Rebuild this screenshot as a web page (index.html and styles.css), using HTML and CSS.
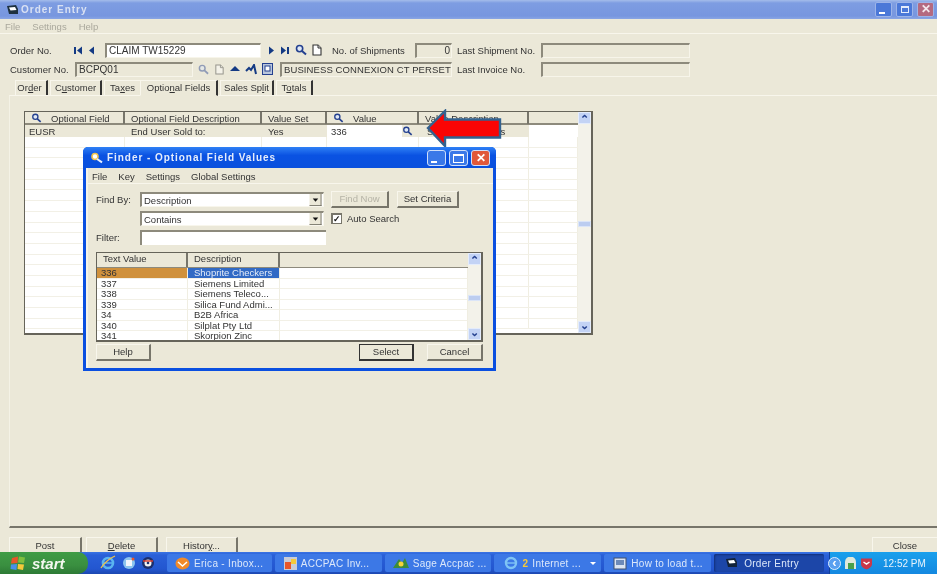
FILE: index.html
```html
<!DOCTYPE html>
<html lang="en">
<head>
<meta charset="utf-8">
<title>Order Entry</title>
<link rel="stylesheet" href="styles.css">
</head>
<body>
<svg class="defs" width="0" height="0" aria-hidden="true">
  <symbol id="mag" viewBox="0 0 12 12"><circle cx="4.6" cy="4.6" r="3.1" fill="#dfe8f5" stroke="#24408f" stroke-width="1.6"/><path d="M7 7l4 3.6" stroke="#24408f" stroke-width="2"/></symbol>
  <symbol id="mag-gold" viewBox="0 0 14 12"><circle cx="5" cy="4.5" r="3" fill="#fff" stroke="#f0c24a" stroke-width="1.6"/><path d="M7 7l5 3.4" stroke="#e8f0ff" stroke-width="2"/></symbol>
  <symbol id="doc" viewBox="0 0 12 12"><path d="M2 1h5l3 3v7H2z" fill="#fff" stroke="#333" stroke-width="1.1"/><path d="M7 1v3h3" fill="#ddd" stroke="#333"/></symbol>
  <symbol id="combo" viewBox="0 0 13 13"><rect width="13" height="13" fill="#ebe8d8"/><path d="M0 12.500h13M12.500 0v13" stroke="#77756a"/><path d="M3.500 5h6L6.500 8.500z" fill="#111"/></symbol>
</svg>
<div class="screen">
  <div class="app">
    <header class="titlebar">
      <svg class="appicon" width="13" height="12" viewBox="0 0 13 12"><path d="M1 2l9-1 2 4v5H3z" fill="#1d3140"/><path d="M3 3.500l6-.5 1.500 3-6 .5z" fill="#fff"/></svg>
      <span class="apptitle">Order Entry</span>
      <div class="winbtns">
        <span class="wb"><i class="ico-min"></i></span>
        <span class="wb"><i class="ico-rest"></i></span>
        <span class="wb wb-close">✕</span>
      </div>
    </header>
    <nav class="menubar"><span>File</span><span>Settings</span><span>Help</span></nav>

    <section class="form">
      <div class="row">
        <label class="lbl l-order">Order No.</label>
        <span class="vcr">
          <svg width="26" height="9" viewBox="0 0 26 9"><path d="M0 1h2v7H0zM8 0.500v8L3 4.500zM20 0.500v8l-5-4z" fill="#143a84"/></svg>
        </span>
        <span class="field white f-order">CLAIM TW15229</span>
        <span class="nav2">
          <svg width="24" height="9" viewBox="0 0 24 9"><path d="M2 .5v8l5-4zM14 .5v8l5-4zM20 1h2v7h-2z" fill="#143a84"/></svg>
          <svg class="i12" width="12" height="12"><use href="#mag"/></svg>
          <svg class="i12" width="12" height="12"><use href="#doc"/></svg>
        </span>
        <label class="lbl l-ship">No. of Shipments</label>
        <span class="field f-ship">0</span>
        <label class="lbl l-last">Last Shipment No.</label>
        <span class="field f-last"></span>
      </div>
      <div class="row row2">
        <label class="lbl l-cust">Customer No.</label>
        <span class="field f-cust">BCPQ01</span>
        <span class="cust-icons">
          <svg class="faded" width="11" height="11"><use href="#mag"/></svg>
          <svg class="faded" width="11" height="11"><use href="#doc"/></svg>
          <svg width="10" height="8" viewBox="0 0 10 8"><path d="M5 1l5 5H0z" fill="#143a84"/></svg>
          <svg width="12" height="11" viewBox="0 0 12 11"><path d="M1 7l3-3 2 2 3-5 2 9" fill="none" stroke="#143a84" stroke-width="2"/></svg>
          <svg width="11" height="12" viewBox="0 0 11 12"><rect x=".5" y=".5" width="10" height="11" fill="#b9c6dc" stroke="#24408f"/><rect x="3" y="3" width="5" height="5" fill="#fff" stroke="#24408f"/></svg>
        </span>
        <span class="field f-name">BUSINESS CONNEXION CT PERSET</span>
        <label class="lbl l-inv">Last Invoice No.</label>
        <span class="field f-last"></span>
      </div>
    </section>

    <div class="tabs">
      <span class="tab t1">Or<u>d</u>er</span>
      <span class="tab t2">C<u>u</u>stomer</span>
      <span class="tab t3">Ta<u>x</u>es</span>
      <span class="tab t4 active">Optio<u>n</u>al Fields</span>
      <span class="tab t5">Sales Sp<u>l</u>it</span>
      <span class="tab t6">T<u>o</u>tals</span>
    </div>

    <main class="panel">
      <div class="grid">
        <div class="grid-main">
          <div class="ghead">
            <span class="c1"><svg width="11" height="10"><use href="#mag"/></svg><b>Optional Field</b></span>
            <span class="c2">Optional Field Description</span>
            <span class="c3">Value Set</span>
            <span class="c4"><svg width="11" height="10"><use href="#mag"/></svg><b>Value</b></span>
            <span class="c5">Value Description</span>
            <span class="c6"></span>
          </div>
          <div class="grow first">
            <span class="c1">EUSR</span><span class="c2">End User Sold to:</span><span class="c3">Yes</span>
            <span class="c4 cell-edit">336<svg width="11" height="10"><use href="#mag"/></svg></span>
            <span class="c5">Shoprite Checkers</span><span class="c6 cell-w"></span>
          </div>
          <div class="grow"><span class="c1"></span><span class="c2"></span><span class="c3"></span><span class="c4"></span><span class="c5"></span><span class="c6"></span></div>
          <div class="grow"><span class="c1"></span><span class="c2"></span><span class="c3"></span><span class="c4"></span><span class="c5"></span><span class="c6"></span></div>
          <div class="grow"><span class="c1"></span><span class="c2"></span><span class="c3"></span><span class="c4"></span><span class="c5"></span><span class="c6"></span></div>
          <div class="grow"><span class="c1"></span><span class="c2"></span><span class="c3"></span><span class="c4"></span><span class="c5"></span><span class="c6"></span></div>
          <div class="grow"><span class="c1"></span><span class="c2"></span><span class="c3"></span><span class="c4"></span><span class="c5"></span><span class="c6"></span></div>
          <div class="grow"><span class="c1"></span><span class="c2"></span><span class="c3"></span><span class="c4"></span><span class="c5"></span><span class="c6"></span></div>
          <div class="grow"><span class="c1"></span><span class="c2"></span><span class="c3"></span><span class="c4"></span><span class="c5"></span><span class="c6"></span></div>
          <div class="grow"><span class="c1"></span><span class="c2"></span><span class="c3"></span><span class="c4"></span><span class="c5"></span><span class="c6"></span></div>
          <div class="grow"><span class="c1"></span><span class="c2"></span><span class="c3"></span><span class="c4"></span><span class="c5"></span><span class="c6"></span></div>
          <div class="grow"><span class="c1"></span><span class="c2"></span><span class="c3"></span><span class="c4"></span><span class="c5"></span><span class="c6"></span></div>
          <div class="grow"><span class="c1"></span><span class="c2"></span><span class="c3"></span><span class="c4"></span><span class="c5"></span><span class="c6"></span></div>
          <div class="grow"><span class="c1"></span><span class="c2"></span><span class="c3"></span><span class="c4"></span><span class="c5"></span><span class="c6"></span></div>
          <div class="grow"><span class="c1"></span><span class="c2"></span><span class="c3"></span><span class="c4"></span><span class="c5"></span><span class="c6"></span></div>
          <div class="grow"><span class="c1"></span><span class="c2"></span><span class="c3"></span><span class="c4"></span><span class="c5"></span><span class="c6"></span></div>
          <div class="grow"><span class="c1"></span><span class="c2"></span><span class="c3"></span><span class="c4"></span><span class="c5"></span><span class="c6"></span></div>
          <div class="grow"><span class="c1"></span><span class="c2"></span><span class="c3"></span><span class="c4"></span><span class="c5"></span><span class="c6"></span></div>
          <div class="grow"><span class="c1"></span><span class="c2"></span><span class="c3"></span><span class="c4"></span><span class="c5"></span><span class="c6"></span></div>
          <div class="grow"><span class="c1"></span><span class="c2"></span><span class="c3"></span><span class="c4"></span><span class="c5"></span><span class="c6"></span></div>
        </div>
        <div class="sbar big">
          <span class="sb-btn">⌃</span>
          <span class="thumb th-main"></span>
          <span class="sb-btn down">⌄</span>
        </div>
      </div>
    </main>

    <footer class="actions">
      <span class="btn-f b-post">Post</span>
      <span class="btn-f b-del"><u>D</u>elete</span>
      <span class="btn-f b-his">Histor<u>y</u>...</span>
      <span class="btn-f b-close">Close</span>
    </footer>
  </div>

  <div class="taskbar">
    <div class="start">
      <svg width="17" height="15" viewBox="0 0 17 15"><path d="M2 2l6-1.500L7.500 7 1 7.500z" fill="#e8562a"/><path d="M9 .5l6 1L14 7l-6-.5z" fill="#7fbf3f"/><path d="M1 8.500L7 8l-.5 6L.5 13z" fill="#4a8fe8"/><path d="M8 8l6 .5-1 5.500-5.500-1z" fill="#f5c93a"/></svg>
      <span>start</span>
    </div>
    <div class="quick">
      <svg width="16" height="16" viewBox="0 0 16 16"><circle cx="8" cy="8" r="5" fill="none" stroke="#5ab4f0" stroke-width="2.600"/><path d="M3.500 8h9" stroke="#5ab4f0" stroke-width="1.500"/><path d="M1 13C3 9 10 3 15 1" fill="none" stroke="#f0c24a" stroke-width="1.200"/></svg>
      <svg width="14" height="14" viewBox="0 0 14 14"><circle cx="7" cy="7" r="6" fill="#8cc4ee"/><rect x="4" y="4" width="6" height="6" fill="#f2f6fc"/><circle cx="11" cy="3" r="1.500" fill="#e8562a"/></svg>
      <svg width="14" height="14" viewBox="0 0 14 14"><circle cx="7" cy="7" r="6" fill="#1d2f6b"/><circle cx="7" cy="7" r="3.500" fill="#f2f2f2"/><path d="M2 5h10" stroke="#d8412f" stroke-width="1.500"/><circle cx="7" cy="7" r="1.300" fill="#1d2f6b"/></svg>
    </div>
    <div class="tasks">
      <span class="task t-1"><svg width="15" height="13" viewBox="0 0 15 13"><ellipse cx="7.500" cy="6.500" rx="7" ry="6" fill="#f08a2a"/><path d="M3 5l4.500 4L12 5" fill="none" stroke="#fff" stroke-width="1.500"/></svg>Erica - Inbox...</span>
      <span class="task t-2"><svg width="13" height="13" viewBox="0 0 13 13"><rect width="13" height="13" fill="#c8ccd8"/><rect x="1" y="5" width="6" height="7" fill="#e8562a"/><rect x="7" y="2" width="5" height="5" fill="#f5c93a"/></svg>ACCPAC Inv...</span>
      <span class="task t-3"><svg width="16" height="12" viewBox="0 0 16 12"><path d="M0 11L6 2l3 4 3-5 4 10z" fill="#3c8c3c"/><circle cx="8" cy="7" r="2.500" fill="#f5d33a"/></svg>Sage Accpac ...</span>
      <span class="task t-4"><svg width="14" height="14" viewBox="0 0 14 14"><circle cx="7" cy="7" r="5" fill="none" stroke="#7fc4f5" stroke-width="2.400"/><path d="M3 7h8" stroke="#7fc4f5" stroke-width="1.400"/></svg><em>2</em>Internet ...<i class="caret"></i></span>
      <span class="task t-5"><svg width="14" height="13" viewBox="0 0 14 13"><rect x="1" y="1" width="12" height="11" fill="#dbe4f2" stroke="#40506e"/><rect x="3" y="3" width="8" height="5" fill="#6c89b8"/></svg>How to load t...</span>
      <span class="task t-6 on"><svg width="13" height="12" viewBox="0 0 13 12"><path d="M1 2l9-1 2 4v5H3z" fill="#12233a"/><path d="M3 3.500l6-.5 1.500 3-6 .5z" fill="#fff"/></svg>Order Entry</span>
    </div>
    <div class="tray">
      <span class="chev">‹</span>
      <svg width="13" height="13" viewBox="0 0 13 13"><path d="M1 12V5a5.500 5.500 0 0 1 11 0v7z" fill="#dfe8da"/><rect x="4" y="6" width="6" height="6" fill="#49a04a"/></svg>
      <svg width="13" height="13" viewBox="0 0 13 13"><path d="M1 1.500h11V7c0 3-3 4.500-5.500 5.500C4 11.500 1 10 1 7z" fill="#c9384a"/><path d="M3.500 5l3 2 3-2" stroke="#fff" stroke-width="1.500" fill="none"/></svg>
      <span class="clock">12:52 PM</span>
    </div>
  </div>

  <svg class="arrow" width="78" height="40" viewBox="0 0 78 40"><path d="M3 19L20 2v8.500h55v18H20V37z" fill="#fb0404" stroke="#33628f" stroke-width="2.400"/></svg>

  <section class="finder">
    <header class="f-title">
      <svg width="14" height="12"><use href="#mag-gold"/></svg>
      <span class="f-title-text">Finder - Optional Field Values</span>
      <div class="f-btns">
        <span class="fb"><i class="ico-min"></i></span>
        <span class="fb"><i class="ico-max"></i></span>
        <span class="fb fb-x">✕</span>
      </div>
    </header>
    <div class="f-body">
      <nav class="f-menu"><span>File</span><span>Key</span><span>Settings</span><span>Global Settings</span></nav>
      <div class="f-form">
        <label class="f-lbl">Find By:</label>
        <span class="combo">Description<svg width="13" height="13"><use href="#combo"/></svg></span>
        <span class="xbtn disabled">Find Now</span>
        <span class="xbtn set">Set Criteria</span>

        <span class="f-lbl"></span>
        <span class="combo">Contains<svg width="13" height="13"><use href="#combo"/></svg></span>
        <span class="auto"><i class="chk">✓</i>Auto Search</span>

        <label class="f-lbl">Filter:</label>
        <span class="filter"></span>
      </div>
      <div class="list">
        <div class="list-main">
          <div class="lhead"><span class="l1">Text Value</span><span class="l2">Description</span><span class="l3"></span></div>
          <div class="lrow sel"><span class="l1">336</span><span class="l2">Shoprite Checkers</span><span class="l3"></span></div>
          <div class="lrow"><span class="l1">337</span><span class="l2">Siemens Limited</span><span class="l3"></span></div>
          <div class="lrow"><span class="l1">338</span><span class="l2">Siemens Teleco...</span><span class="l3"></span></div>
          <div class="lrow"><span class="l1">339</span><span class="l2">Silica Fund Admi...</span><span class="l3"></span></div>
          <div class="lrow"><span class="l1">34</span><span class="l2">B2B Africa</span><span class="l3"></span></div>
          <div class="lrow"><span class="l1">340</span><span class="l2">Silplat Pty Ltd</span><span class="l3"></span></div>
          <div class="lrow"><span class="l1">341</span><span class="l2">Skorpion Zinc</span><span class="l3"></span></div>
        </div>
        <div class="sbar small">
          <span class="sb-btn">⌃</span>
          <span class="thumb th-list"></span>
          <span class="sb-btn down">⌄</span>
        </div>
      </div>
      <div class="f-foot">
        <span class="xbtn help">Help</span>
        <span class="xbtn select">Select</span>
        <span class="xbtn cancel">Cancel</span>
      </div>
    </div>
  </section>
</div>
</body>
</html>
```
FILE: styles.css
```css
* { box-sizing: border-box; }
html, body { margin: 0; padding: 0; }
body { width: 937px; height: 574px; overflow: hidden; background: #ebe8d8; }
.defs { position: absolute; }
.screen {
  position: relative; width: 937px; height: 574px; overflow: hidden;
  display: flex; flex-direction: column;
  font: 9.5px "Liberation Sans", Arial, sans-serif; color: #333;
  filter: blur(.5px);
}
.app { flex: 1; display: flex; flex-direction: column; min-height: 0; background: #ebe8d8; }

/* title + menu */
.titlebar {
  height: 19px; display: flex; align-items: center; padding: 0 2px 0 6px; flex: none;
  background: linear-gradient(#a4bcea 0, #7e9de2 3px, #7796df 16px, #8aa6e4 19px);
}
.apptitle { margin-left: 2px; font-size: 10px; font-weight: bold; letter-spacing: 1px; color: #d9e1f3; }
.winbtns { margin-left: auto; display: flex; gap: 4px; margin-right: 1px; }
.wb { width: 17px; height: 15px; background: #4b78d8; border: 1px solid #9db4e8; border-radius: 2px; position: relative; display: block; }
.wb-close { background: #b46a80; color: #f4e8ec; font: bold 12px/13px "Liberation Sans", sans-serif; text-align: center; }
.ico-min { position: absolute; left: 3px; bottom: 2px; width: 6px; height: 2px; background: #fff; }
.ico-rest { position: absolute; left: 4px; top: 3px; width: 8px; height: 7px; border: 1px solid #e5ecfb; border-top-width: 2px; }
.ico-max { position: absolute; left: 3px; top: 3px; width: 11px; height: 9px; border: 1px solid #fff; border-top-width: 2px; }
.menubar {
  height: 15px; flex: none; display: flex; gap: 12px; align-items: center; padding-left: 5px;
  color: #aaa89c; border-bottom: 1px solid #f8f6ec;
}

/* form */
.form { height: 46px; flex: none; padding-top: 8px; }
.row { height: 16px; display: flex; align-items: center; }
.row2 { margin-top: 3px; }
.lbl { white-space: nowrap; display: block; }
.field {
  display: block; height: 15px; padding: 0 2px; line-height: 12px; white-space: nowrap; overflow: hidden;
  border: 1px solid #f7f5ea; border-top: 2px solid #8d8a7c; border-left: 2px solid #8d8a7c; background: #ebe8d8;
  font-size: 10px;
}
.white { background: #fff; }
.l-order { margin-left: 10px; width: 64px; }
.vcr { width: 31px; display: flex; align-items: center; }
.f-order { width: 156px; }
.nav2 { width: 65px; margin-left: 6px; display: flex; align-items: center; gap: 4px; }
.l-ship { width: 83px; }
.f-ship { width: 37px; text-align: right; padding-right: 1px; }
.l-last { width: 84px; margin-left: 5px; }
.f-last { width: 149px; }
.l-cust { margin-left: 10px; width: 65px; }
.f-cust { width: 118px; }
.cust-icons { width: 87px; padding-left: 5px; padding-right: 7px; display: flex; align-items: center; justify-content: space-between; }
.faded { opacity: .45; }
.f-name { width: 172px; font-size: 9.5px; letter-spacing: .1px; }
.l-inv { width: 84px; margin-left: 5px; }

/* tabs */
.tabs { height: 15px; flex: none; display: flex; align-items: flex-end; padding-left: 15px; position: relative; z-index: 1; }
.tab { height: 15px; line-height: 14px; text-align: center; border-right: 2px solid #333; border-top: 1px solid #f8f6ec; border-left: 1px solid #f8f6ec; margin-right: 2px; white-space: nowrap; }
.t1 { width: 33px; padding-right: 3px; } .t2 { width: 52px; } .t3 { width: 36px; margin-right: 0; border-right: 0; }
.t4 { width: 78px; height: 16px; line-height: 13px; background: #ebe8d8; border-bottom: 1px solid #ebe8d8; margin-bottom: -1px; }
.t5 { width: 54px; } .t6 { width: 37px; }

/* main panel */
.panel { flex: 1; min-height: 0; padding: 15px 0 0 14px; margin-left: 9px; border-top: 1px solid #f8f6ec; border-left: 1px solid #f4f2e6; border-bottom: 2px solid #77756a; }
.grid { width: 569px; height: 224px; border: 1px solid #66645a; border-width: 1px 2px 2px 1px; display: flex; background: #fff; }
.grid-main { flex: 1; min-width: 0; overflow: hidden; }
.ghead { height: 13px; display: flex; background: #ebe8d8; border-bottom: 2px solid #8d8a7c; }
.ghead span { border-right: 2px solid #77756a; line-height: 11px; height: 12px; white-space: nowrap; padding-left: 6px; display: flex; align-items: center; }
.ghead svg { margin-right: 9px; flex: none; }
.ghead b { font-weight: normal; }
.ghead .c6 { border-right: 0; }
.grow { height: 10.7px; display: flex; border-bottom: 1px solid #f2f0e6; }
.grow span { border-right: 1px solid #f0eee2; white-space: nowrap; overflow: hidden; display: flex; align-items: center; padding-left: 4px; }
.grow.first { height: 12px; background: #ebe8d8; border-bottom: 0; }
.first span { border-right: 0; font-size: 9.5px; }
.c1 { width: 100px; flex: none; }
.c2 { width: 137px; flex: none; }
.c3 { width: 65px; flex: none; }
.c4 { width: 92px; flex: none; }
.c5 { width: 110px; flex: none; }
.c6 { flex: 1; }
.first .c2, .first .c3 { padding-left: 6px; }
.grow .cell-edit { background: linear-gradient(90deg, #fff 75px, #ebe8d8 75px); justify-content: space-between; padding-right: 6px; border-right: 0; }
.grow .first-c5 { padding-left: 6px; }
.first .c5 { padding-left: 8px; }
.cell-w { background: #fff; }

.sbar { background: #f3f2ea; display: flex; flex-direction: column; justify-content: space-between; position: relative; flex: none; }
.sbar.big { width: 13px; }
.sbar.small { width: 13px; }
.sb-btn { height: 12px; background: #c3d3f5; color: #24408f; font: bold 11px/13px "Liberation Sans", sans-serif; text-align: center; display: block; border: 1px solid #e4ecfb; }
.sb-btn.down { line-height: 6px; }
.thumb { position: absolute; left: 0; width: 100%; height: 6px; background: #bccdf0; border: 1px solid #dbe5f8; }
.th-main { top: 109px; }
.th-list { top: 42px; }

/* footer */
.actions { height: 24px; flex: none; display: flex; align-items: flex-start; padding: 9px 0 0 9px; overflow: hidden; }
.btn-f { display: block; height: 18px; text-align: center; line-height: 16px; color: #333; border: 1px solid #f8f6ec; border-right: 2px solid #77756a; }
.b-post { width: 73px; margin-right: 4px; }
.b-del { width: 72px; margin-right: 8px; }
.b-his { width: 72px; }
.b-close { width: 65px; margin-left: auto; border-right: 0; }

/* taskbar */
.taskbar { height: 22px; flex: none; display: flex; align-items: stretch; background: linear-gradient(#3a74e4 0, #2a60d8 3px, #2356d0 17px, #1c48b0 22px); color: #dce8fa; font-size: 10px; }
.start { width: 88px; display: flex; align-items: center; gap: 5px; padding-left: 10px; border-radius: 0 10px 10px 0; background: linear-gradient(#3f9c45, #3a8f40 60%, #2d7a35); color: #f4f8f0; font: italic bold 15px "Liberation Sans", sans-serif; }
.quick { width: 73px; padding: 0 6px 0 12px; display: flex; align-items: center; justify-content: space-between; }
.tasks { flex: 1; display: flex; align-items: center; gap: 3px; padding-left: 6px; min-width: 0; }
.task { display: flex; align-items: center; gap: 4px; height: 18px; background: #3c78e6; border-radius: 2px; padding-left: 8px; white-space: nowrap; letter-spacing: .3px; position: relative; }
.task em { font-style: normal; color: #f5c93a; font-weight: bold; }
.t-1 { width: 105px; } .t-2 { width: 107px; padding-left: 9px; } .t-3 { width: 107px; } .t-4 { width: 107px; padding-left: 10px; } .t-5 { width: 107px; padding-left: 9px; }
.t-6 { width: 110px; padding-left: 11px; gap: 6px; }
.on { background: #1c46a8; box-shadow: inset 1px 1px 2px #12307a; }
.caret { position: absolute; right: 5px; top: 8px; border: 3px solid transparent; border-top-color: #fff; }
.tray { width: 108px; margin-left: 5px; display: flex; align-items: center; gap: 3px; background: linear-gradient(#1aa0ec, #1488e0); padding-left: 0; border-left: 1px solid #0e3f9c; }
.chev { width: 13px; height: 13px; border-radius: 50%; background: #5aa0f0; border: 1px solid #dcecff; color: #fff; font: bold 13px/9px "Liberation Sans", sans-serif; text-align: center; flex: none; margin-left: -2px; }
.clock { margin-left: 7px; white-space: nowrap; color: #e8f2fc; }

/* arrow and finder float over the app */
.arrow { position: absolute; left: 425px; top: 109px; }
.finder {
  position: absolute; left: 83px; top: 147px; width: 413px; height: 224px;
  display: flex; flex-direction: column; background: #0a4fe0; border-radius: 5px 5px 0 0;
  padding: 0 3px 3px 3px;
}
.f-title { height: 21px; flex: none; display: flex; align-items: center; background: linear-gradient(#2f80f5, #0a52e2 40%, #0a50dd); margin: 0 -3px; padding: 0 6px 0 7px; border-radius: 5px 5px 0 0; }
.f-title-text { margin-left: 3px; color: #e6eefc; font-size: 10px; font-weight: bold; letter-spacing: .95px; white-space: nowrap; }
.f-btns { margin-left: auto; display: flex; gap: 3px; }
.fb { display: block; width: 19px; height: 16px; border: 1px solid #cfdffa; border-radius: 3px; background: #3a78e8; position: relative; }
.fb-x { background: #e0583a; color: #fff; font: bold 12px/14px "Liberation Sans", sans-serif; text-align: center; }
.f-body { flex: 1; min-height: 0; background: #ebe8d8; border-left: 2px solid #f6f4e8; padding: 0 8px 0 0; display: flex; flex-direction: column; }
.f-menu { height: 15px; flex: none; margin-top: 1px; margin-right: -8px; display: flex; gap: 11px; align-items: center; padding-left: 4px; border-bottom: 1px solid #f8f6ec; }
.f-form { display: grid; grid-template-columns: 44px 184px 73px 62px; align-items: center; padding: 8px 0 0 8px; grid-auto-rows: 15px; row-gap: 4px; flex: none; }
.f-lbl { display: block; }
.combo {
  display: flex; align-items: center; justify-content: space-between; height: 15px; background: #fff; padding: 0 1px 0 2px;
  border: 1px solid #f8f6ec; border-top: 2px solid #8d8a7c; border-left: 2px solid #8d8a7c;
}
.combo svg { height: 12px; width: 13px; }
.xbtn { display: block; height: 17px; text-align: center; line-height: 14px; border: 1px solid #f8f6ec; border-right: 2px solid #77756a; border-bottom: 2px solid #77756a; }
.disabled { width: 58px; margin-left: 7px; color: #b5b3a6; }
.set { width: 62px; }
.auto { display: flex; align-items: center; gap: 5px; margin-left: 7px; white-space: nowrap; grid-column: 3 / 5; }
.chk { width: 11px; height: 11px; display: block; background: #fff; border: 1px solid #77756a; border-top-width: 2px; border-left-width: 2px; font: bold 9px/8px "Liberation Sans", sans-serif; color: #111; text-align: center; }
.filter { display: block; width: 186px; height: 15px; background: #fff; border-top: 2px solid #8d8a7c; border-left: 2px solid #8d8a7c; }
.list { margin: 7px 0 0 8px; height: 90px; width: 387px; border: 1px solid #66645a; border-width: 1px 2px 2px 1px; display: flex; background: #fff; flex: none; }
.list-main { flex: 1; min-width: 0; overflow: hidden; }
.lhead { height: 15px; display: flex; background: #ebe8d8; border-bottom: 1px solid #8d8a7c; }
.lhead span { line-height: 12px; border-right: 2px solid #77756a; padding-left: 6px; }
.lhead .l3 { border-right: 0; }
.lrow { height: 10.5px; display: flex; line-height: 10px; }
.lrow span { padding-left: 4px; white-space: nowrap; border-right: 1px solid #f0eee2; border-bottom: 1px solid #f2f0e6; }
.lrow .l2 { padding-left: 6px; }
.l1 { width: 91px; flex: none; }
.l2 { width: 92px; flex: none; }
.l3 { flex: 1; }
.sel .l1 { background: #d0913c; }
.lrow.sel .l2 { background: #316ac5; color: #e4ecf8; }
.f-foot { display: flex; padding: 2px 0 0 8px; align-items: flex-start; flex: none; }
.help { width: 55px; margin-right: 208px; }
.select { width: 55px; margin-right: 13px; border: 1px solid #333; border-right-width: 2px; border-bottom-width: 2px; }
.cancel { width: 56px; }
```
